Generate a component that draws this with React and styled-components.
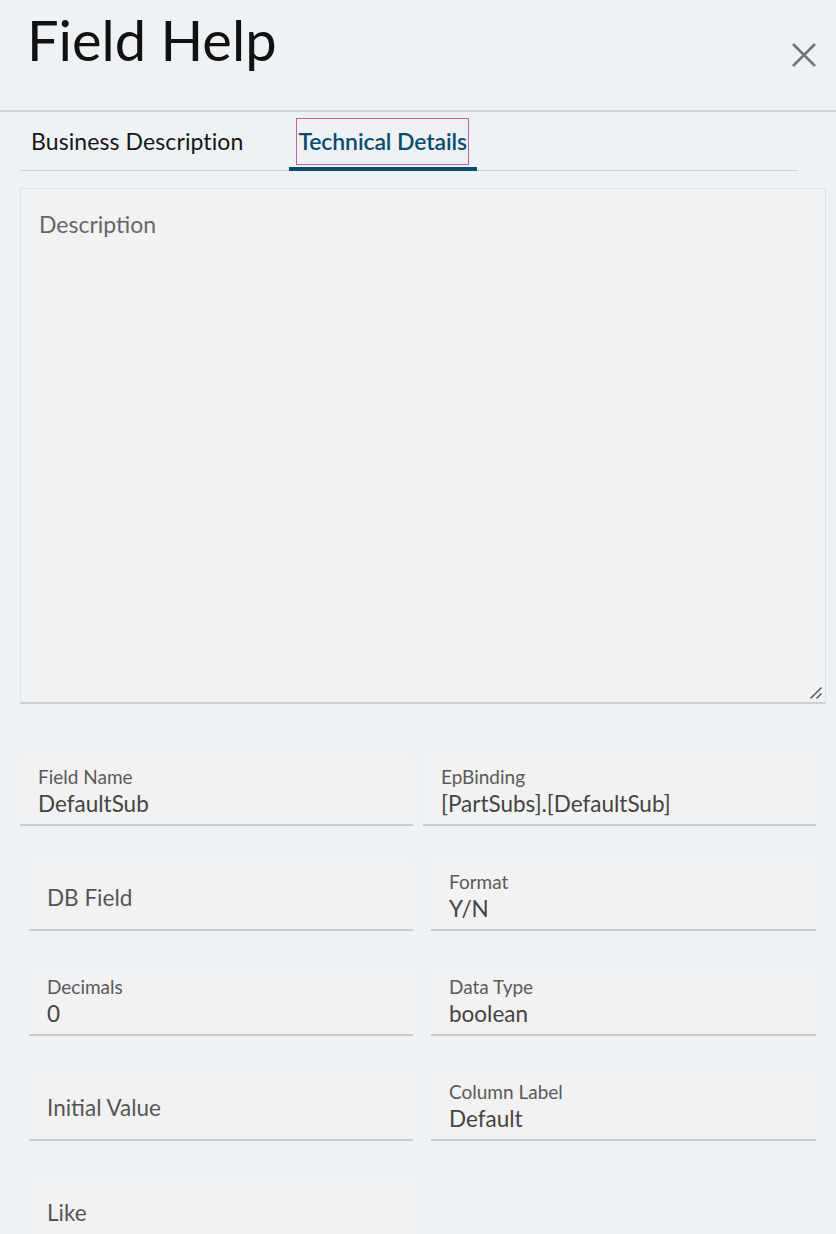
import React from "react";
import styled, { createGlobalStyle } from "styled-components";

const Global = createGlobalStyle`
  html, body { margin: 0; padding: 0; background: #eff2f5; }
  body { font-family: Lato, "Open Sans", sans-serif; color: #222; }
  * { box-sizing: border-box; }
`;

const Page = styled.div`
  width: 836px;
  height: 1234px;
  overflow: hidden;
  background: #eff2f5;
`;

const Header = styled.header`
  height: 112px;
  border-bottom: 2px solid #d2d6da;
  display: flex;
  justify-content: space-between;
  align-items: flex-start;
  padding: 0 18px 0 27px;
`;

const Title = styled.h1`
  margin: 0;
  padding-top: 4px;
  font-size: 56px;
  font-weight: 400;
  line-height: 72px;
  color: #111;
`;

const CloseButton = styled.button`
  margin-top: 41px;
  width: 28px;
  height: 28px;
  padding: 0;
  border: none;
  background: transparent;
  display: flex;
  align-items: center;
  justify-content: center;
`;

const Body = styled.div`
  padding: 0 20px;
`;

const Tabs = styled.nav`
  width: 778px;
  height: 59px;
  border-bottom: 1px solid #cdd1d5;
  display: flex;
  align-items: stretch;
  gap: 36px;
`;

const Tab = styled.div`
  display: flex;
  align-items: center;
  padding: 0 8px 0 ${(p) => (p.$first ? "9px" : "7px")};
  font-size: 23px;
  letter-spacing: 0.1px;
  color: ${(p) => (p.$active ? "#0b4d70" : "#161616")};
  ${(p) => (p.$active ? "font-weight: 600; letter-spacing: -0.1px;" : "")}
  margin-bottom: -1px;
  border-bottom: 4px solid ${(p) => (p.$active ? "#0d4a6d" : "transparent")};
`;

const TabLabel = styled.span`
  display: flex;
  align-items: center;
  height: 47px;
  padding: 0 1px;
  margin-top: 3px;
  border: ${(p) => (p.$focus ? "1px solid #c2619b" : "1px solid transparent")};
`;

const DescWrap = styled.div`
  position: relative;
  margin-top: 17px;
  width: 806px;
  height: 516px;
`;

const DescArea = styled.textarea`
  display: block;
  width: 100%;
  height: 100%;
  padding: 21px 18px;
  background: #f2f2f2;
  border: 1px solid #dfe2e5;
  border-bottom: 2px solid #cfcfcf;
  font-family: Lato, "Open Sans", sans-serif;
  font-size: 23px;
  color: #555;
  resize: none;
  &::placeholder { color: #666; }
`;

const Grip = styled.svg`
  position: absolute;
  right: 3px;
  bottom: 4px;
  pointer-events: none;
`;

const FirstRow = styled.div`
  margin-top: 51px;
  width: 796px;
  display: grid;
  grid-template-columns: 393px 393px;
  column-gap: 10px;
`;

const Rows = styled.div`
  margin-top: 34px;
  padding-left: 9px;
  width: 796px;
  display: grid;
  grid-template-columns: 384px 385px;
  column-gap: 18px;
  row-gap: 34px;
`;

const Field = styled.div`
  height: 71px;
  background: #f2f2f2;
  border-bottom: 2px solid #cbcbcb;
  padding: 10px 18px 0;
  display: flex;
  flex-direction: column;
  justify-content: ${(p) => (p.$empty ? "center" : "flex-start")};
  ${(p) => (p.$empty ? "padding-top: 6px; padding-bottom: 0;" : "")}
`;

const Label = styled.span`
  font-size: 19px;
  line-height: 24px;
  color: #5a5a5a;
`;

const Value = styled.span`
  font-size: 22.5px;
  line-height: 30px;
  color: #444;
`;

const Placeholder = styled.span`
  font-size: 22.5px;
  color: #555;
`;

function FieldBox({ label, value }) {
  if (value === undefined || value === "") {
    return (
      <Field $empty>
        <Placeholder>{label}</Placeholder>
      </Field>
    );
  }
  return (
    <Field>
      <Label>{label}</Label>
      <Value>{value}</Value>
    </Field>
  );
}

export default function App() {
  return (
    <Page>
      <Global />
      <Header>
        <Title>Field Help</Title>
        <CloseButton aria-label="Close">
          <svg width="28" height="28" viewBox="0 0 28 28">
            <path
              d="M3 3 L25 25 M25 3 L3 25"
              stroke="#6e7780"
              strokeWidth="2.6"
              fill="none"
            />
          </svg>
        </CloseButton>
      </Header>
      <Body>
        <Tabs>
          <Tab $first>
            <TabLabel>Business Description</TabLabel>
          </Tab>
          <Tab $active>
            <TabLabel $focus>Technical Details</TabLabel>
          </Tab>
        </Tabs>
        <DescWrap>
          <DescArea placeholder="Description" />
          <Grip width="14" height="14" viewBox="0 0 14 14">
            <path
              d="M1.5 12.5 L12.5 1.5 M7.5 12.5 L12.5 7.5"
              stroke="#5f5f5f"
              strokeWidth="1.6"
              fill="none"
            />
          </Grip>
        </DescWrap>
        <FirstRow>
          <FieldBox label="Field Name" value="DefaultSub" />
          <FieldBox label="EpBinding" value="[PartSubs].[DefaultSub]" />
        </FirstRow>
        <Rows>
          <FieldBox label="DB Field" />
          <FieldBox label="Format" value="Y/N" />
          <FieldBox label="Decimals" value="0" />
          <FieldBox label="Data Type" value="boolean" />
          <FieldBox label="Initial Value" />
          <FieldBox label="Column Label" value="Default" />
          <FieldBox label="Like" />
        </Rows>
      </Body>
    </Page>
  );
}
